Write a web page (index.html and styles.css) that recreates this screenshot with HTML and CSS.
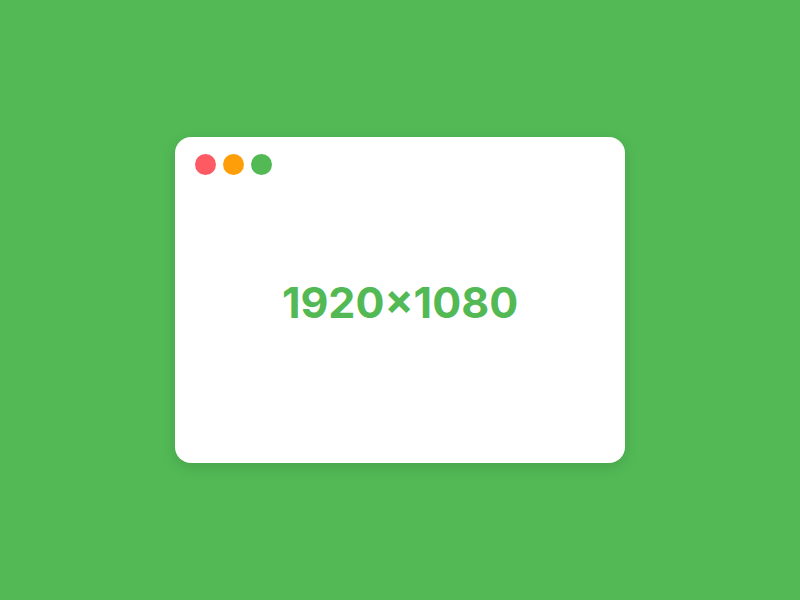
FILE: index.html
```html
<!DOCTYPE html>
<html>
<head>
<meta charset="utf-8">
<link rel="stylesheet" href="styles.css">
</head>
<body>
<div class="stage">
  <div class="window">
    <div class="titlebar">
      <span class="dot red"></span>
      <span class="dot orange"></span>
      <span class="dot green"></span>
    </div>
    <div class="content">1920×1080</div>
  </div>
</div>
</body>
</html>
```
FILE: styles.css
```css
html, body {
  margin: 0;
  padding: 0;
  background: #52b955;
}
.stage {
  width: 800px;
  height: 600px;
  display: flex;
  align-items: center;
  justify-content: center;
}
.window {
  width: 450px;
  height: 326px;
  background: #ffffff;
  border-radius: 16px;
  box-shadow: 0 4px 14px rgba(0, 0, 0, 0.12);
  display: flex;
  flex-direction: column;
}
.titlebar {
  display: flex;
  gap: 7px;
  padding: 17px 20px 0;
}
.dot {
  width: 21px;
  height: 21px;
  border-radius: 50%;
}
.red { background: #fe5a63; }
.orange { background: #fe9f0a; }
.green { background: #52b955; }
.content {
  flex: 1;
  display: flex;
  align-items: center;
  justify-content: center;
  font-family: Inter, "Liberation Sans", sans-serif;
  font-weight: 700;
  font-size: 43px;
  color: #52b955;
  padding-bottom: 34px;
}
```
